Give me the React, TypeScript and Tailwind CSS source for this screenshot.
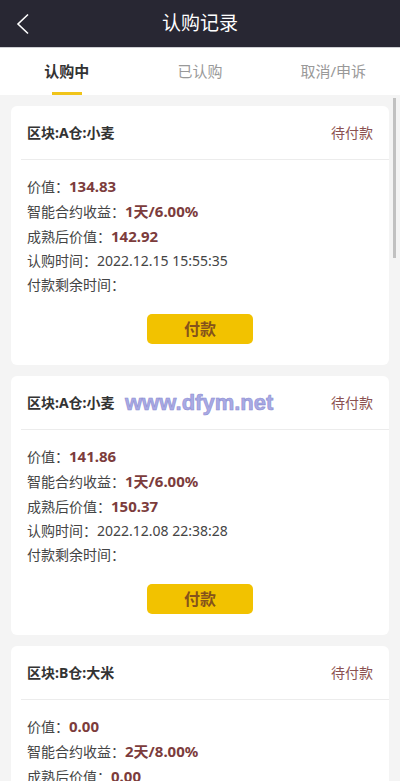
import React, { useState } from "react";

type Order = {
  title: string;
  value: string;
  income: string;
  matured: string;
  time: string;
};

const orders: Order[] = [
  { title: "区块:A仓:小麦", value: "134.83", income: "1天/6.00%", matured: "142.92", time: "2022.12.15 15:55:35" },
  { title: "区块:A仓:小麦", value: "141.86", income: "1天/6.00%", matured: "150.37", time: "2022.12.08 22:38:28" },
  { title: "区块:B仓:大米", value: "0.00", income: "2天/8.00%", matured: "0.00", time: "2022.12.01 10:12:46" },
];

const tabs = ["认购中", "已认购", "取消/申诉"];

const OrderCard = ({ order }: { order: Order }) => (
  <div className="bg-white rounded-[6px] pb-[21px]">
    {/* Card header */}
    <div className="h-[53px] flex items-center justify-between pl-4 pr-4">
      <span className="text-[14px] font-bold text-[#333]">{order.title}</span>
      <span className="text-[14px] text-[#8b5151]">待付款</span>
    </div>
    <div className="ml-[10px] h-px bg-[#ececec]" />

    {/* Card body */}
    <div className="pl-4 pt-[14px] text-[14px] text-[#444] leading-[24px]">
      <div>
        价值：<span className="font-bold text-[15px] text-[#7c3c3c]">{order.value}</span>
      </div>
      <div>
        智能合约收益：<span className="font-bold text-[15px] text-[#7c3c3c]">{order.income}</span>
      </div>
      <div>
        成熟后价值：<span className="font-bold text-[15px] text-[#7c3c3c]">{order.matured}</span>
      </div>
      <div>认购时间：{order.time}</div>
      <div>付款剩余时间：</div>
    </div>

    <div className="flex justify-center mt-[17px]">
      <button className="w-[106px] h-[30px] rounded-[5px] bg-[#f2c200] text-[16px] font-bold text-[#85521c]">
        付款
      </button>
    </div>
  </div>
);

const App = () => {
  const [active, setActive] = useState(0);

  return (
    <div
      className="w-[400px] h-[781px] flex flex-col bg-[#f4f4f4] overflow-hidden"
      style={{ fontFamily: '"Noto Sans", "Noto Sans CJK SC", sans-serif' }}
    >
      {/* Top bar */}
      <div className="h-[48px] shrink-0 bg-[#282733] border-b border-[#cfcfd4] flex items-center relative">
        <svg
          className="absolute left-[15px] top-[13px]"
          width="16"
          height="22"
          viewBox="0 0 16 22"
          fill="none"
          stroke="#fff"
          strokeWidth="1.6"
        >
          <path d="M13 1.5 L3 11 L13 20.5" />
        </svg>
        <h1 className="flex-1 text-center text-[19px] text-white">认购记录</h1>
      </div>

      {/* Tabs */}
      <div className="h-[47px] shrink-0 bg-white grid grid-cols-3">
        {tabs.map((t, i) => (
          <button
            key={t}
            onClick={() => setActive(i)}
            className={
              i === active
                ? "relative flex items-center justify-center text-[15px] font-bold text-[#333]"
                : "relative flex items-center justify-center text-[15px] text-[#999]"
            }
          >
            {t}
            {i === active && (
              <span className="absolute bottom-0 left-1/2 -translate-x-1/2 w-[30px] h-[3px] bg-[#f0c419]" />
            )}
          </button>
        ))}
      </div>

      {/* List */}
      <div className="relative flex-1 overflow-hidden">
        <div className="flex flex-col gap-[11px] px-[11px] pt-[11px]">
          {orders.map((o, i) => (
            <OrderCard key={i} order={o} />
          ))}
        </div>

        {/* scrollbar thumb */}
        <div className="absolute right-[4px] top-[3px] w-[3px] h-[160px] bg-[#c1c1c1]" />

        {/* watermark */}
        <div
          className="absolute left-[125px] top-[291px] text-[22px] font-bold text-[#a9aae4] pointer-events-none"
          style={{ fontFamily: '"Liberation Sans", Arial, sans-serif', WebkitTextStroke: "0.6px #8c8dd2" }}
        >
          www.dfym.net
        </div>
      </div>
    </div>
  );
};

export default App;
